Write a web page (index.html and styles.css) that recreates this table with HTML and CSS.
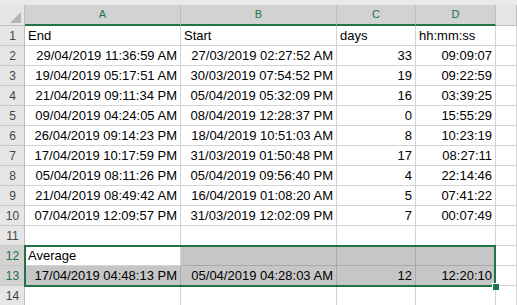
FILE: index.html
```html
<!DOCTYPE html>
<html lang="en">
<head>
    <meta charset="UTF-8">
    <title>Sheet1</title>
    <link rel="stylesheet" href="styles.css">
</head>
<body>
    <!-- Top strip under the formula bar -->
    <div class="top-strip"></div>

    <div class="sheet">
        <table class="grid">
            <colgroup>
                <col class="col-rh">
                <col class="col-a">
                <col class="col-b">
                <col class="col-c">
                <col class="col-d">
                <col>
            </colgroup>
            <thead>
                <tr>
                    <th class="corner">
                        <svg width="24" height="20" viewBox="0 0 24 20"><polygon points="21,7 21,18 10,18" fill="#b4b4b4"/></svg>
                    </th>
                    <th class="col-head sel">A</th>
                    <th class="col-head sel">B</th>
                    <th class="col-head sel">C</th>
                    <th class="col-head sel">D</th>
                    <th class="col-head"></th>
                </tr>
            </thead>
            <tbody>
                <tr><th class="row-head">1</th><td>End</td><td>Start</td><td>days</td><td>hh:mm:ss</td><td></td></tr>
                <tr><th class="row-head">2</th><td class="num">29/04/2019 11:36:59 AM</td><td class="num">27/03/2019 02:27:52 AM</td><td class="num">33</td><td class="num">09:09:07</td><td></td></tr>
                <tr><th class="row-head">3</th><td class="num">19/04/2019 05:17:51 AM</td><td class="num">30/03/2019 07:54:52 PM</td><td class="num">19</td><td class="num">09:22:59</td><td></td></tr>
                <tr><th class="row-head">4</th><td class="num">21/04/2019 09:11:34 PM</td><td class="num">05/04/2019 05:32:09 PM</td><td class="num">16</td><td class="num">03:39:25</td><td></td></tr>
                <tr><th class="row-head">5</th><td class="num">09/04/2019 04:24:05 AM</td><td class="num">08/04/2019 12:28:37 PM</td><td class="num">0</td><td class="num">15:55:29</td><td></td></tr>
                <tr><th class="row-head">6</th><td class="num">26/04/2019 09:14:23 PM</td><td class="num">18/04/2019 10:51:03 AM</td><td class="num">8</td><td class="num">10:23:19</td><td></td></tr>
                <tr><th class="row-head">7</th><td class="num">17/04/2019 10:17:59 PM</td><td class="num">31/03/2019 01:50:48 PM</td><td class="num">17</td><td class="num">08:27:11</td><td></td></tr>
                <tr><th class="row-head">8</th><td class="num">05/04/2019 08:11:26 PM</td><td class="num">05/04/2019 09:56:40 PM</td><td class="num">4</td><td class="num">22:14:46</td><td></td></tr>
                <tr><th class="row-head">9</th><td class="num">21/04/2019 08:49:42 AM</td><td class="num">16/04/2019 01:08:20 AM</td><td class="num">5</td><td class="num">07:41:22</td><td></td></tr>
                <tr><th class="row-head">10</th><td class="num">07/04/2019 12:09:57 PM</td><td class="num">31/03/2019 12:02:09 PM</td><td class="num">7</td><td class="num">00:07:49</td><td></td></tr>
                <tr><th class="row-head">11</th><td></td><td></td><td></td><td></td><td></td></tr>
                <tr><th class="row-head sel">12</th><td>Average</td><td class="shade"></td><td class="shade"></td><td class="shade"></td><td></td></tr>
                <tr><th class="row-head sel">13</th><td class="num shade">17/04/2019 04:48:13 PM</td><td class="num shade">05/04/2019 04:28:03 AM</td><td class="num shade">12</td><td class="num shade">12:20:10</td><td></td></tr>
                <tr><th class="row-head">14</th><td></td><td></td><td></td><td></td><td></td></tr>
            </tbody>
        </table>

        <!-- Selection A12:D13 -->
        <div class="selection"></div>
        <div class="fill-handle"></div>
    </div>
</body>
</html>
```

FILE: styles.css
```css
* {
    margin: 0;
    padding: 0;
    box-sizing: border-box;
}
body {
    font-family: 'Liberation Sans', Arial, sans-serif;
    background-color: #ffffff;
    color: #000000;
    width: 517px;
    height: 305px;
    overflow: hidden;
}
.top-strip {
    height: 5px;
    background-color: #e9e9e9;
}
.sheet {
    position: relative;
}
.grid {
    table-layout: fixed;
    border-collapse: separate;
    border-spacing: 0;
    width: 100%;
}
.col-rh { width: 25px; }
.col-a { width: 156px; }
.col-b { width: 156px; }
.col-c { width: 79px; }
.col-d { width: 80px; }

/* Column headers */
thead th {
    height: 21px;
    background-color: #e6e6e6;
    border-right: 1px solid #bdbdbd;
    border-bottom: 1px solid #bdbdbd;
    font-size: 11px;
    font-weight: normal;
    color: #444444;
    text-align: center;
    vertical-align: middle;
    padding-bottom: 1px;
}
thead th.sel {
    background-color: #d2d2d2;
    color: #217346;
    border-bottom: 2px solid #217346;
}
thead th.corner {
    padding: 0;
    line-height: 0;
    vertical-align: top;
    border-right: 1px solid #bdbdbd;
}

/* Row headers */
.row-head {
    height: 20px;
    background-color: #e6e6e6;
    border-right: 1px solid #bdbdbd;
    border-bottom: 1px solid #c8c8c8;
    font-size: 12px;
    font-weight: normal;
    color: #444444;
    text-align: center;
    padding-left: 1px;
}
.row-head.sel {
    background-color: #d2d2d2;
    color: #217346;
}

/* Cells */
td {
    height: 20px;
    border-right: 1px solid #d4d4d4;
    border-bottom: 1px solid #d4d4d4;
    font-size: 13px;
    line-height: 19px;
    padding: 0 3px;
    white-space: nowrap;
    overflow: hidden;
    vertical-align: bottom;
}
td.num {
    text-align: right;
}
td.shade {
    background-color: #c6c6c6;
    border-right-color: #a9a9a9;
    border-bottom-color: #a9a9a9;
}

/* Selection outline and fill handle */
.selection {
    position: absolute;
    left: 24px;
    top: 240px;
    width: 472px;
    height: 42px;
    border: 2px solid #217346;
    pointer-events: none;
}
.fill-handle {
    position: absolute;
    left: 492px;
    top: 278px;
    width: 7px;
    height: 7px;
    background-color: #217346;
    border-left: 1px solid #ffffff;
    border-top: 1px solid #ffffff;
}
```
